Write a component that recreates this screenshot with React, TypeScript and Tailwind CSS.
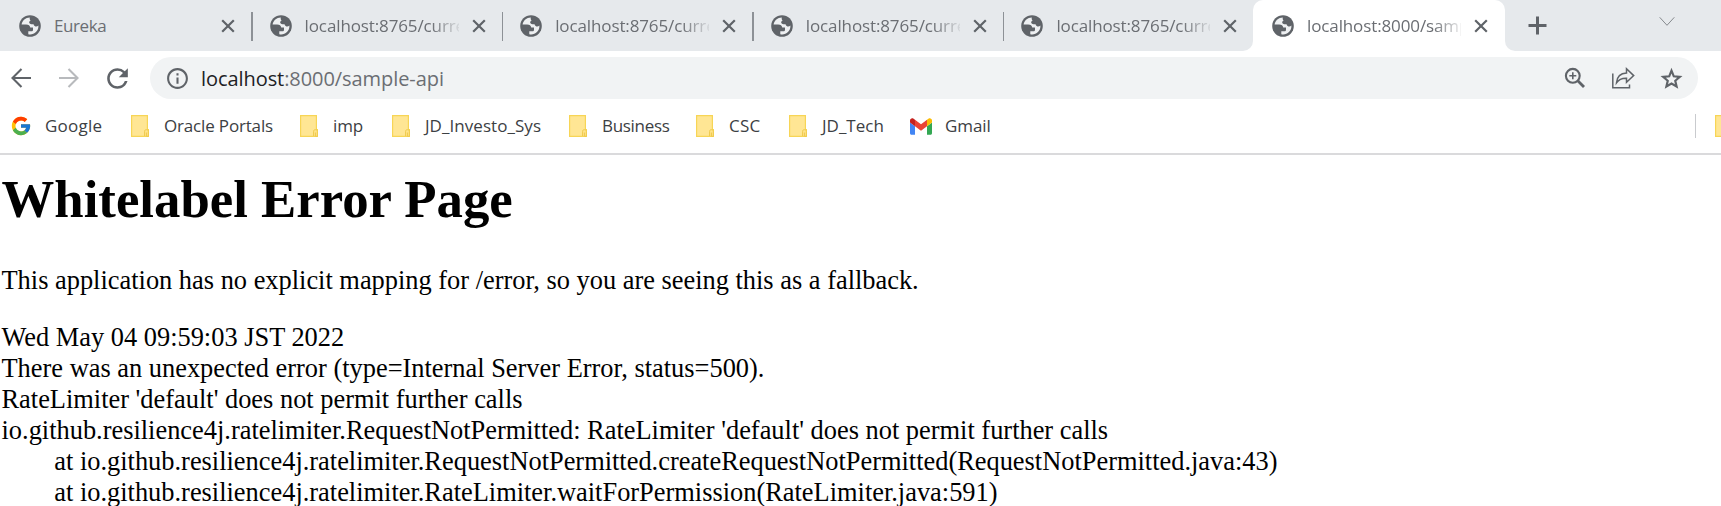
import React from 'react';
import { MdInfoOutline, MdRefresh } from 'react-icons/md';
import { FcGoogle } from 'react-icons/fc';

function GlobeIcon() {
  return (
    <svg width="22" height="22" viewBox="0 0 22 22" className="shrink-0">
      <circle cx="11" cy="11" r="10.8" fill="#5f6368" />
      <path
        d="M10.8 2.6C6.600 2.700 3.300 5.600 2.600 9.400H7.200C9.600 9.400 11 10.600 11.200 12.600H14V14.900C14 15.700 13.300 16.200 12.500 16.200H9.300V19.200C14.800 20.300 19.400 16.300 19.400 11.200V10.500C18.600 11.300 17.500 11.700 16.400 11.400C15.300 11.100 14.800 10.300 14.600 9.300C12.900 9.500 10.800 9.300 10.300 8.100C9.900 6.900 10.600 6.100 11.600 5.800C10.800 4.900 10.500 3.800 10.800 2.600Z"
        fill="#eef0f2"
      />
    </svg>
  );
}

function CloseIcon() {
  return (
    <svg width="14" height="14" viewBox="0 0 14 14" className="shrink-0" stroke="#5f6368" strokeWidth="2.2">
      <path d="M1.200 1.200 12.800 12.800M12.800 1.200 1.200 12.800" />
    </svg>
  );
}

function FolderIcon() {
  return (
    <svg width="18" height="22" viewBox="0 0 18 22" className="shrink-0">
      <path d="M0.600 0.600H16.400V14.500H17.400V21.400H0.600Z" fill="#ffe694" stroke="#f7d556" strokeWidth="1.200" />
      <path d="M13.600 21V16.300C13.600 15.200 14.200 14.700 15.400 14.700S17.300 15.200 17.300 16.300V21.300H15.400V17.500" fill="#ffe48a" stroke="#efc94a" strokeWidth="1" />
    </svg>
  );
}

function GmailIcon() {
  return (
    <svg width="22" height="17" viewBox="52 42 88 66" className="shrink-0">
      <path fill="#4285f4" d="M58 108h14V74L52 59v43c0 3.320 2.690 6 6 6" />
      <path fill="#34a853" d="M120 108h14c3.320 0 6-2.690 6-6V59l-20 15" />
      <path fill="#fbbc04" d="M120 48v26l20-15v-8c0-7.420-8.470-11.650-14.400-7.200" />
      <path fill="#ea4335" d="M72 74V48l24 18 24-18v26L96 92" />
      <path fill="#c5221f" d="M52 51v8l20 15V48l-5.600-4.200c-5.940-4.450-14.400-.22-14.400 7.200" />
    </svg>
  );
}

function TabContent({ title, tight }: { title: string; tight?: boolean }) {
  return (
    <div className="flex h-[51px] items-center pl-[19px]">
      <GlobeIcon />
      <span
        className={
          'ml-[13px] w-[154px] shrink-0 overflow-hidden whitespace-nowrap text-[17px] leading-6 text-[#6b6e73] ' +
          (tight
            ? 'tracking-[-0.4px]'
            : 'tracking-[-0.12px] [mask-image:linear-gradient(to_right,black_126px,transparent_158px)]')
        }
      >
        {title}
      </span>
      <span className="ml-[13px] flex">
        <CloseIcon />
      </span>
    </div>
  );
}

const tabs = ['Eureka', 'localhost:8765/curre', 'localhost:8765/curre', 'localhost:8765/curre', 'localhost:8765/curre'];

const folders = [
  { label: 'Oracle Portals', box: 'w-[169px] tracking-[-0.17px]' },
  { label: 'imp', box: 'w-[92px] tracking-[-0.1px]' },
  { label: 'JD_Investo_Sys', box: 'w-[177px] tracking-[0.05px]' },
  { label: 'Business', box: 'w-[127px] tracking-[-0.3px]' },
  { label: 'CSC', box: 'w-[93px] tracking-[0.2px]' },
  { label: 'JD_Tech', box: 'w-[121px]' },
];

export default function App() {
  return (
    <div className="flex h-[506px] w-full flex-col overflow-hidden bg-white font-['Open_Sans',sans-serif]">
      <div className="flex h-[51px] shrink-0">
        <div className="flex w-[1253px] shrink-0 rounded-br-[10px] bg-[#e6e9ec]">
          {tabs.map((t, i) => (
            <div key={i} className="relative w-[250.6px] shrink-0">
              {i > 0 && <span className="absolute left-[0.600px] top-3 h-[29px] w-[1.500px] bg-[#8d9196]" />}
              <TabContent title={t} tight={i === 0} />
            </div>
          ))}
        </div>
        <div className="w-[252px] shrink-0 bg-[#e6e9ec]">
          <div className="h-full rounded-t-[10px] bg-white">
            <TabContent title="localhost:8000/sampl" />
          </div>
        </div>
        <div className="flex flex-1 items-start justify-between rounded-bl-[10px] bg-[#e6e9ec] pl-[23px] pr-[46px] pt-4">
          <svg width="19" height="19" viewBox="0 0 19 19" stroke="#5f6368" strokeWidth="3">
            <path d="M9.500 0.500V18.500M0.500 9.500H18.500" />
          </svg>
          <svg width="16" height="11" viewBox="0 0 16 11" fill="none" stroke="#85898d" strokeWidth="1">
            <path d="M0.700 1.300 8 9.300 15.300 1.300" />
          </svg>
        </div>
      </div>

      <div className="flex h-[54px] shrink-0 items-center pl-[11px] pr-[23px]">
        <svg width="20" height="20" viewBox="0 0 20 20" fill="none" stroke="#5f6368" strokeWidth="2.100">
          <path d="M20 10H2M10.500 1 1.500 10 10.500 19" />
        </svg>
        <svg width="20" height="20" viewBox="0 0 20 20" fill="none" stroke="#b8babd" strokeWidth="2.100" className="ml-7">
          <path d="M0 10H18M9.500 1 18.500 10 9.500 19" />
        </svg>
        <MdRefresh size={31} color="#5f6368" className="ml-[23px]" />
        <div className="ml-[17px] flex h-[42px] flex-1 items-center rounded-full bg-[#f1f3f4] pl-[15px] pr-[14px]">
          <MdInfoOutline size={25} color="#5f6368" />
          <span className="ml-[11px] flex-1 pt-px text-[20px] leading-6 tracking-[-0.07px] text-[#6b6e73]">
            <span className="text-[#202124]">localhost</span>:8000/sample-api
          </span>
          <svg width="22" height="22" viewBox="0 0 22 22" fill="none" stroke="#5f6368" strokeWidth="2.100">
            <circle cx="8.800" cy="8.800" r="6.900" />
            <path d="M13.800 13.800 20 20" strokeWidth="2.800" />
            <path d="M8.800 5.300V12.300M5.300 8.800H12.300" strokeWidth="1.600" />
          </svg>
          <svg width="25" height="22" viewBox="0 0 25 22" fill="none" stroke="#5f6368" strokeWidth="1.500" className="ml-[25px]">
            <path d="M1.800 6.500V20.700H18.500V17.500" />
            <path d="M5.500 15.800C6 9.800 9.800 6.200 15.500 6V1.800L22.700 8.600 15.500 15.300V11.200C11 11 7.800 12.400 5.500 15.800Z" />
          </svg>
          <svg width="25" height="25" viewBox="0 0 24 24" fill="none" stroke="#5f6368" strokeWidth="2.100" className="ml-[23px]">
            <path d="M12 4.500 14.200 9.900 20 10.400 15.600 14.200 16.900 19.700 12 16.800 7.100 19.700 8.400 14.200 4 10.400 9.800 9.900Z" />
          </svg>
        </div>
      </div>

      <div className="flex h-[50px] shrink-0 items-center border-b-2 border-[#dadadc] pb-[6px] pl-[10px] text-[17px] leading-6 text-[#3c4043]">
        <FcGoogle size={22} className="shrink-0" />
        <span className="ml-[13px] w-[86px] tracking-[0.25px]">Google</span>
        {folders.map((f) => (
          <div key={f.label} className={'flex shrink-0 items-center ' + f.box}>
            <FolderIcon />
            <span className="ml-[15px] whitespace-nowrap">{f.label}</span>
          </div>
        ))}
        <GmailIcon />
        <span className="ml-[13px] tracking-[-0.1px]">Gmail</span>
        <div className="ml-auto flex w-[26px] shrink-0 items-center overflow-hidden">
          <span className="mr-[19px] h-6 w-px shrink-0 bg-[#c9cbce]" />
          <FolderIcon />
        </div>
      </div>

      <main className="pl-[1.500px] pt-[14px] font-['Liberation_Serif',serif] text-[26.4px] leading-[31px] text-black">
        <h1 className="text-[52.8px] font-bold leading-[60px]">Whitelabel Error Page</h1>
        <p className="mt-[35.5px]">This application has no explicit mapping for /error, so you are seeing this as a fallback.</p>
        <div className="mt-[26px]">Wed May 04 09:59:03 JST 2022</div>
        <div>There was an unexpected error (type=Internal Server Error, status=500).</div>
        <div>RateLimiter 'default' does not permit further calls</div>
        <div className="whitespace-pre [tab-size:8]">
          {"io.github.resilience4j.ratelimiter.RequestNotPermitted: RateLimiter 'default' does not permit further calls\n" +
            '\tat io.github.resilience4j.ratelimiter.RequestNotPermitted.createRequestNotPermitted(RequestNotPermitted.java:43)\n' +
            '\tat io.github.resilience4j.ratelimiter.RateLimiter.waitForPermission(RateLimiter.java:591)'}
        </div>
      </main>
    </div>
  );
}
